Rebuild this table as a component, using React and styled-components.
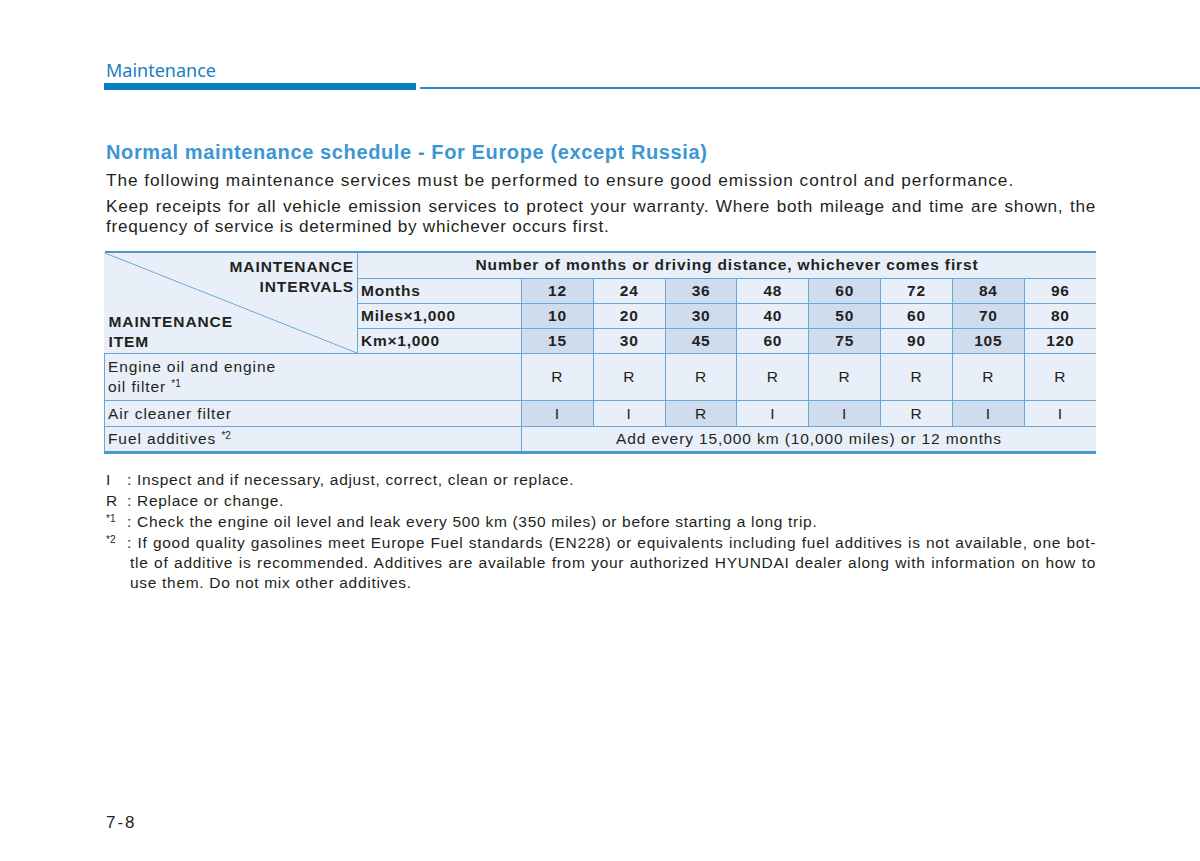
import React from 'react';
import styled, { createGlobalStyle } from 'styled-components';

const GlobalStyle = createGlobalStyle`
    html, body {
        margin: 0;
        padding: 0;
        background: #fff;
    }
    body {
        font-family: "Liberation Sans", Arial, sans-serif;
        color: #231f20;
    }
`

const months = [12, 24, 36, 48, 60, 72, 84, 96]
const miles = [10, 20, 30, 40, 50, 60, 70, 80]
const kms = [15, 30, 45, 60, 75, 90, 105, 120]
const oil = ['R', 'R', 'R', 'R', 'R', 'R', 'R', 'R']
const air = ['I', 'I', 'R', 'I', 'I', 'R', 'I', 'I']

const notes = [
    { mark: 'I', text: 'Inspect and if necessary, adjust, correct, clean or replace.' },
    { mark: 'R', text: 'Replace or change.' },
    { mark: '*', sup: '1', text: 'Check the engine oil level and leak every 500 km (350 miles) or before starting a long trip.' },
    { mark: '*', sup: '2', text: 'If good quality gasolines meet Europe Fuel standards (EN228) or equivalents including fuel additives is not available, one bot-tle of additive is recommended. Additives are available from your authorized HYUNDAI dealer along with information on how to use them. Do not mix other additives.' },
]

export default function App() {
    return (
        <Page>
            <GlobalStyle />
            <Header>
                <Section>Maintenance</Section>
                <Rule>
                    <ThickBar />
                    <ThinBar />
                </Rule>
            </Header>
            <Content>
                <Title>Normal maintenance schedule - For Europe (except Russia)</Title>
                <Para>The following maintenance services must be performed to ensure good emission control and performance.</Para>
                <Para justify>Keep receipts for all vehicle emission services to protect your warranty. Where both mileage and time are shown, the frequency of service is determined by whichever occurs first.</Para>
                <Table>
                    <colgroup>
                        <col style={{ width: 253 }} />
                        <col style={{ width: 164 }} />
                        {months.map(m => <col key={m} />)}
                    </colgroup>
                    <tbody>
                        <Row h={26} top>
                            <Diag rowSpan={4}>
                                <DiagInner>
                                    <DiagTop>MAINTENANCE<br />INTERVALS</DiagTop>
                                    <DiagBottom>MAINTENANCE<br />ITEM</DiagBottom>
                                </DiagInner>
                            </Diag>
                            <Cell colSpan={9} bold wide>Number of months or driving distance, whichever comes first</Cell>
                        </Row>
                        <Row h={25}>
                            <Cell bold left>Months</Cell>
                            {months.map((v, i) => <Cell key={i} bold shade={i % 2 === 0}>{v}</Cell>)}
                        </Row>
                        <Row h={25}>
                            <Cell bold left>Miles×1,000</Cell>
                            {miles.map((v, i) => <Cell key={i} bold shade={i % 2 === 0}>{v}</Cell>)}
                        </Row>
                        <Row h={25}>
                            <Cell bold left>Km×1,000</Cell>
                            {kms.map((v, i) => <Cell key={i} bold shade={i % 2 === 0}>{v}</Cell>)}
                        </Row>
                        <Row h={47}>
                            <Cell colSpan={2} left>Engine oil and engine<br />oil filter <Sup>*1</Sup></Cell>
                            {oil.map((v, i) => <Cell key={i}>{v}</Cell>)}
                        </Row>
                        <Row h={26}>
                            <Cell colSpan={2} left>Air cleaner filter</Cell>
                            {air.map((v, i) => <Cell key={i} shade={i % 2 === 0}>{v}</Cell>)}
                        </Row>
                        <Row h={26} bottom>
                            <Cell colSpan={2} left>Fuel additives <Sup>*2</Sup></Cell>
                            <Cell colSpan={8}>Add every 15,000 km (10,000 miles) or 12 months</Cell>
                        </Row>
                    </tbody>
                </Table>
                <Notes>
                    {notes.map((n, i) => (
                        <Note key={i}>
                            <Mark>{n.sup ? <NoteSup>{n.mark}{n.sup}</NoteSup> : n.mark}</Mark>
                            <NoteText>: {n.text}</NoteText>
                        </Note>
                    ))}
                </Notes>
            </Content>
            <PageNum>7-8</PageNum>
        </Page>
    );
}

const Page = styled.div`
    display: flex;
    flex-direction: column;
    width: 1200px;
    height: 861px;
    padding-top: 58px;
    box-sizing: border-box;
    overflow: hidden;
`
const Header = styled.div`
    display: flex;
    flex-direction: column;
    padding-left: 104px;
`
const Section = styled.div`
    padding-left: 2px;
    font-family: "Noto Sans", "Open Sans", sans-serif;
    font-size: 18px;
    line-height: 25px;
    color: #1b7ec2;
`
const Rule = styled.div`
    display: flex;
    align-items: flex-end;
    gap: 4px;
`
const ThickBar = styled.div`
    width: 312px;
    height: 7px;
    background: #0a7cc4;
`
const ThinBar = styled.div`
    flex: 1;
    height: 2px;
    margin-bottom: 1px;
    background: #2b87c6;
`
const Content = styled.div`
    display: flex;
    flex-direction: column;
    width: 992px;
    margin: 49px 0 0 104px;
`
const Title = styled.div`
    padding-left: 2px;
    font-size: 20px;
    font-weight: bold;
    letter-spacing: 0.62px;
    line-height: 26px;
    color: #3a97d4;
`
const Para = styled.div`
    padding-left: 2px;
    margin-top: ${props => props.justify ? '6px' : '5px'};
    font-size: 17.2px;
    letter-spacing: ${props => props.justify ? '0.72px' : '0.98px'};
    line-height: 20px;
    text-align: ${props => props.justify ? 'justify' : 'left'};
`
const Table = styled.table`
    width: 992px;
    margin-top: 15px;
    border-collapse: collapse;
    table-layout: fixed;
    font-size: 15.5px;
    background: #e8eff8;
`
const Row = styled.tr`
    height: ${props => props.h}px;
    border-top: ${props => props.top ? '2px solid #4a98d2' : '1px solid #6aa7d6'};
    border-bottom: ${props => props.bottom ? '3px solid #4a98d2' : '1px solid #6aa7d6'};
`
const Cell = styled.td`
    padding: 0 0 0 ${props => props.left ? '3px' : '0'};
    text-align: ${props => props.left ? 'left' : 'center'};
    font-weight: ${props => props.bold ? 'bold' : 'normal'};
    letter-spacing: ${props => props.wide ? '0.86px' : props.bold ? '0.75px' : '0.9px'};
    line-height: 20px;
    background: ${props => props.shade ? '#cfdcee' : 'transparent'};
    border-left: 1px solid #6aa7d6;
    white-space: nowrap;
`
const Diag = styled.td`
    padding: 0;
    background: linear-gradient(to top right, transparent calc(50% - 0.8px), #5a9fd3 50%, transparent calc(50% + 0.8px));
`
const DiagInner = styled.div`
    display: flex;
    flex-direction: column;
    justify-content: space-between;
    height: 100px;
    font-weight: bold;
    letter-spacing: 0.9px;
    line-height: 20px;
`
const DiagTop = styled.div`
    padding-top: 4px;
    padding-right: 3px;
    text-align: right;
`
const DiagBottom = styled.div`
    padding-left: 4px;
    padding-bottom: 1px;
    text-align: left;
`
const Sup = styled.span`
    font-size: 10px;
    line-height: 0;
    letter-spacing: 0;
    vertical-align: 5px;
`
const Notes = styled.div`
    display: flex;
    flex-direction: column;
    gap: 1px;
    margin-top: 16px;
    font-size: 15.5px;
    letter-spacing: 0.7px;
    line-height: 20px;
`
const Note = styled.div`
    display: grid;
    grid-template-columns: 21px 1fr;
    padding-left: 2px;
`
const Mark = styled.span`
    white-space: nowrap;
`
const NoteSup = styled.span`
    font-size: 10px;
    line-height: 0;
    letter-spacing: 0;
    vertical-align: 5px;
`
const NoteText = styled.div`
    padding-left: 3px;
    text-indent: -3px;
    text-align: justify;
`
const PageNum = styled.div`
    margin: auto 0 28px 106px;
    font-size: 17px;
    letter-spacing: 2px;
    line-height: 20px;
`
